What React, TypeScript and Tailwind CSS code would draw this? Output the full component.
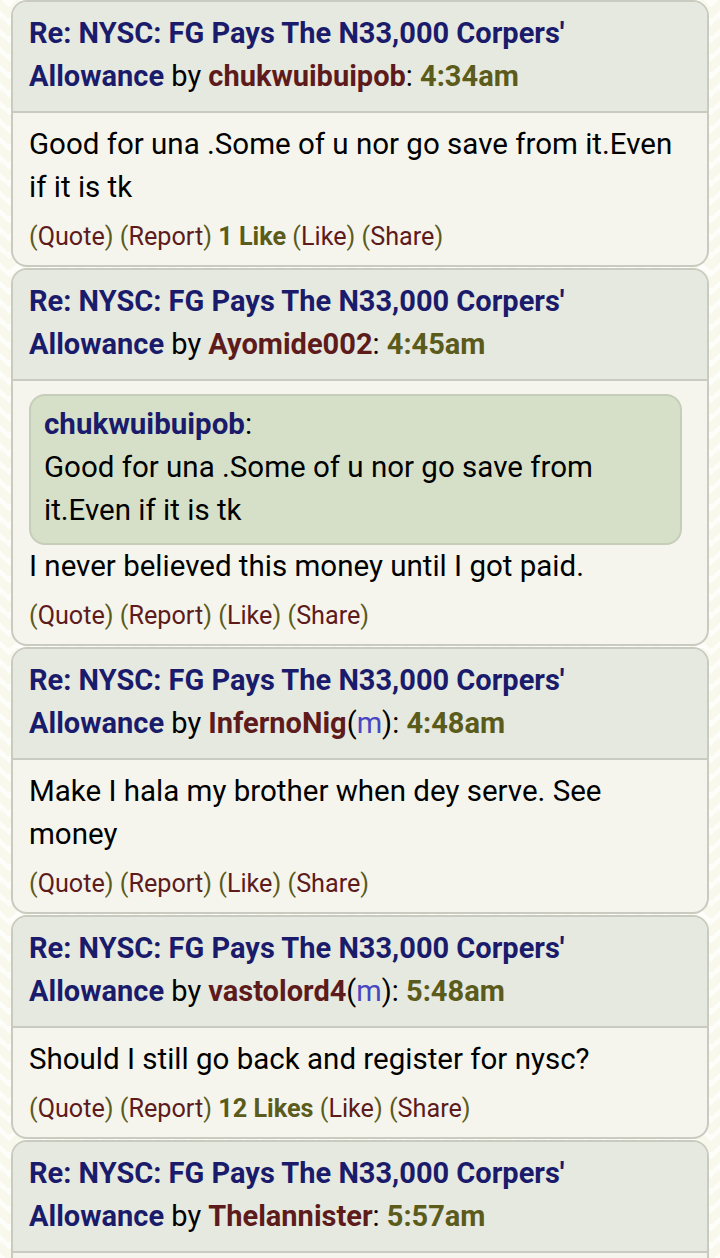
type Post = {
  user: string;
  mobile?: boolean;
  time: string;
  quote?: { user: string; text: string };
  body: string;
  likes?: string;
};

const posts: Post[] = [
  {
    user: 'chukwuibuipob',
    time: '4:34am',
    body: 'Good for una .Some of u nor go save from it.Even if it is tk',
    likes: '1 Like',
  },
  {
    user: 'Ayomide002',
    time: '4:45am',
    quote: {
      user: 'chukwuibuipob',
      text: 'Good for una .Some of u nor go save from it.Even if it is tk',
    },
    body: 'I never believed this money until I got paid.',
  },
  {
    user: 'InfernoNig',
    mobile: true,
    time: '4:48am',
    body: 'Make I hala my brother when dey serve. See money',
  },
  {
    user: 'vastolord4',
    mobile: true,
    time: '5:48am',
    body: 'Should I still go back and register for nysc?',
    likes: '12 Likes',
  },
  {
    user: 'Thelannister',
    time: '5:57am',
    body: 'Na wa o',
  },
];

function Act({ label }: { label: string }) {
  return (
    <span className="text-[#5b5b1c]">
      (<span className="text-[#5e1b1b]">{label}</span>)
    </span>
  );
}

function PostCard({ post }: { post: Post }) {
  return (
    <div className="mx-[11px] mb-[1px] rounded-[16px] border-2 border-[#c9cbc0] bg-[#f5f5ed] overflow-hidden">
      {/* шапка поста */}
      <div className="bg-[#e6e9e0] border-b-2 border-[#c9cbc0] pl-4 pr-7 pt-[10px] pb-[13px] text-[29px] leading-[43px] text-black">
        <span className="font-bold text-[#1b1b6b]">Re: NYSC: FG Pays The N33,000 Corpers' Allowance</span>{' '}
        by <span className="font-bold text-[#5e1b1b]">{post.user}</span>
        {post.mobile && (
          <>
            (<span className="text-[#4747c4]">m</span>)
          </>
        )}
        : <span className="font-bold text-[#5b5b1c]">{post.time}</span>
      </div>

      <div className="pl-4 pr-7 pt-[10px] pb-[10px] text-[29.5px] leading-[43px] text-black">
        {post.quote && (
          <div className="mt-[3px] -mr-[3px] rounded-[16px] border-2 border-[#c6cdb9] bg-[#d6e0c9] pl-[13px] pr-3 pt-[7px] pb-[11px]">
            <span className="font-bold text-[#1b1b6b]">{post.quote.user}</span>:
            <br />
            {post.quote.text}
          </div>
        )}
        <div>{post.body}</div>
        <div className="mt-[10px] text-[25.2px] leading-[36px]">
          <Act label="Quote" /> <Act label="Report" />{' '}
          {post.likes && (
            <>
              <span className="font-bold text-[#5b5b1c]">{post.likes}</span>{' '}
            </>
          )}
          <Act label="Like" /> <Act label="Share" />
        </div>
      </div>
    </div>
  );
}

export default function App() {
  return (
    <div
      className="h-[1258px] overflow-hidden bg-[#f8f8ec] bg-[linear-gradient(135deg,#ffffffb0_22%,transparent_22%),linear-gradient(225deg,#ffffffb0_22%,transparent_22%),linear-gradient(315deg,#ffffffb0_22%,transparent_22%),linear-gradient(45deg,#ffffffb0_22%,transparent_22%)] bg-[length:18px_18px] bg-[position:-9px_0,-9px_0,0_0,0_0]"
      style={{ fontFamily: 'Roboto, "Liberation Sans", sans-serif' }}
    >
      {posts.map((p, i) => (
        <PostCard key={i} post={p} />
      ))}
    </div>
  );
}
